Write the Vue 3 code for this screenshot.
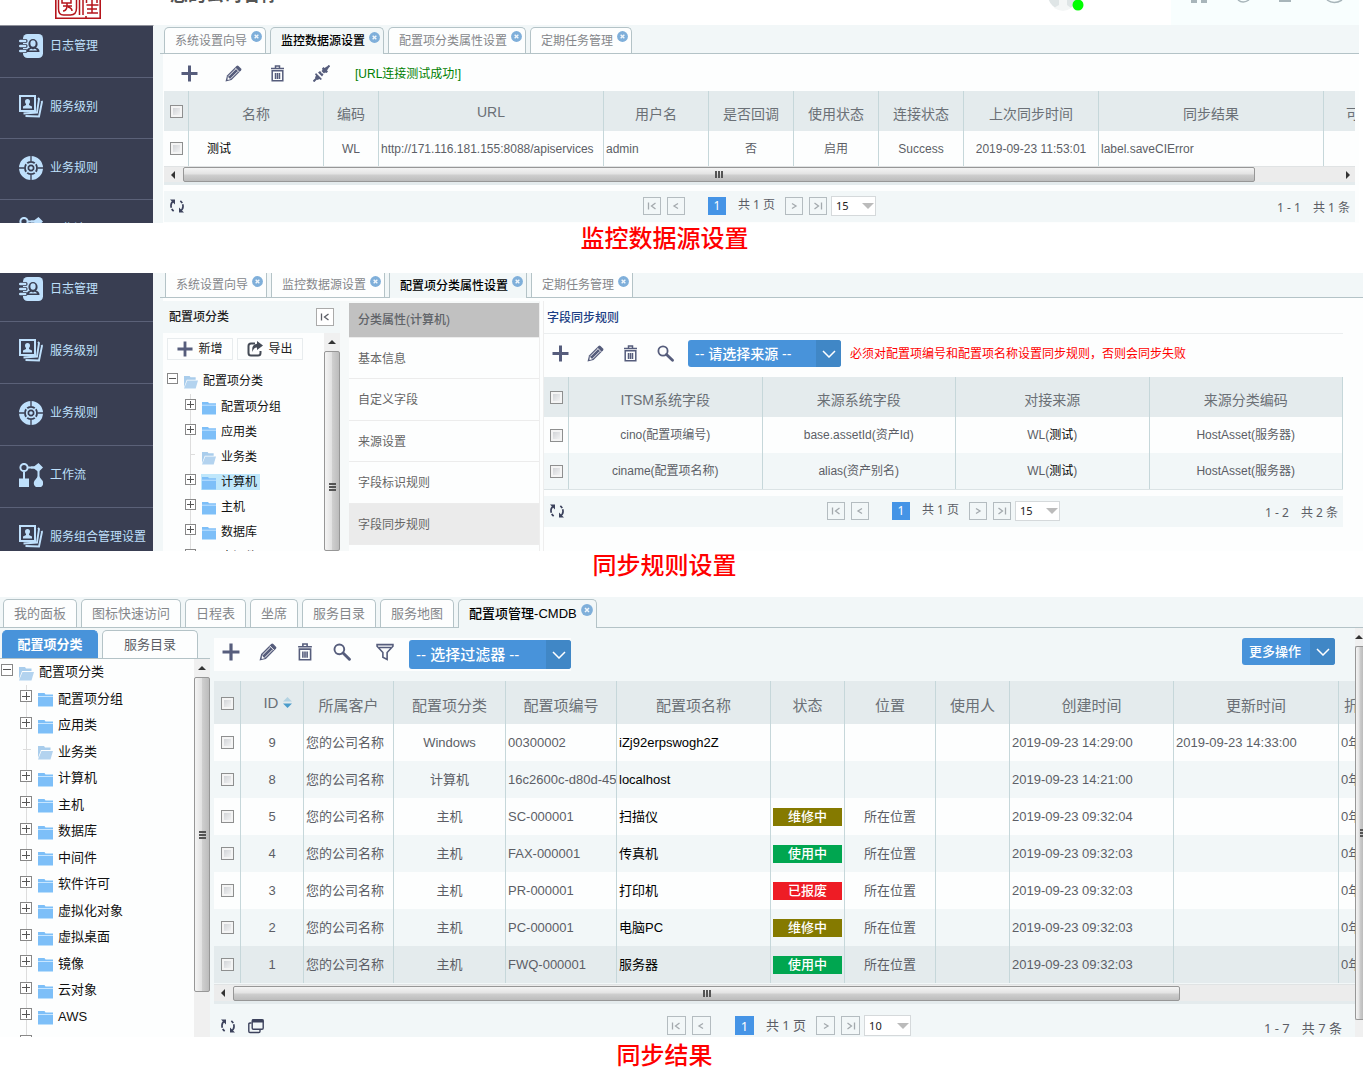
<script setup>
import { ref } from 'vue'

const menuTop = [
  { icon: 'log', label: '日志管理' },
  { icon: 'cards', label: '服务级别' },
  { icon: 'wheel', label: '业务规则' },
  { icon: 'flow', label: '工作流' },
]
const menuFull = [...menuTop, { icon: 'cards', label: '服务组合管理设置' }]

const settingTabs = ['系统设置向导', '监控数据源设置', '配置项分类属性设置', '定期任务管理']
const cmdbTabs = ['我的面板', '图标快速访问', '日程表', '坐席', '服务目录', '服务地图', '配置项管理-CMDB']

const sourceTools = [
  { icon: 'plus', name: '新增' },
  { icon: 'pencil', name: '编辑' },
  { icon: 'trash', name: '删除' },
  { icon: 'plug', name: '连接测试' },
]
const ruleTools = [...sourceTools.slice(0, 3), { icon: 'search', name: '查询' }]
const cmdbTools = [...ruleTools, { icon: 'filter', name: '过滤' }]

const sourceCols = [25, 135, 55, 225, 105, 85, 85, 85, 135, 225]
const cmdbCols = [27, 63, 90, 112, 111, 154, 74, 91, 74, 164, 165]

const ruleRows = [
  { field: 'cino(配置项编号)', source: 'base.assetId(资产Id)' },
  { field: 'ciname(配置项名称)', source: 'alias(资产别名)' },
]

const attrMenu = ['基本信息', '自定义字段', '来源设置', '字段标识规则', '字段同步规则']
const treeSmall = ['配置项分组', '应用类', '业务类', '计算机', '主机', '数据库', '中间件']
const treeLarge = [
  '配置项分组', '应用类', '业务类', '计算机', '主机', '数据库', '中间件',
  '软件许可', '虚拟化对象', '虚拟桌面', '镜像', '云对象', 'AWS', 'DevOps',
]

const company = '您的公司名称'
const place = '所在位置'
const ciRows = [
  { id: 9, type: 'Windows', no: '00300002', name: 'iZj92erpswogh2Z', state: '', place: '', created: '2019-09-23 14:29:00', updated: '2019-09-23 14:33:00' },
  { id: 8, type: '计算机', no: '16c2600c-d80d-45', name: 'localhost', state: '', place: '', created: '2019-09-23 14:21:00', updated: '' },
  { id: 5, type: '主机', no: 'SC-000001', name: '扫描仪', state: '维修中', place, created: '2019-09-23 09:32:04', updated: '' },
  { id: 4, type: '主机', no: 'FAX-000001', name: '传真机', state: '使用中', place, created: '2019-09-23 09:32:03', updated: '' },
  { id: 3, type: '主机', no: 'PR-000001', name: '打印机', state: '已报废', place, created: '2019-09-23 09:32:03', updated: '' },
  { id: 2, type: '主机', no: 'PC-000001', name: '电脑PC', state: '维修中', place, created: '2019-09-23 09:32:03', updated: '' },
  { id: 1, type: '主机', no: 'FWQ-000001', name: '服务器', state: '使用中', place, created: '2019-09-23 09:32:03', updated: '' },
]
const stateClass = { 维修中: 'repair', 使用中: 'active', 已报废: 'scrap' }

const sizeA = ref('15')
const sizeB = ref('15')
const sizeC = ref('10')
</script>

<template>
  <svg class="defs" width="0" height="0" aria-hidden="true">
    <symbol id="i-plus" viewBox="0 0 17 17"><path d="M8.500 .5v16M.5 8.500h16" fill="none" stroke="#565d7c" stroke-width="3" /></symbol>
    <symbol id="i-pencil" viewBox="0 0 17 17">
      <path d="M.5 16.500l1.500-6L11.500 1q1-1 2 0l2.500 2.500q1 1 0 2L6.500 15z" fill="#565d7c" />
      <path d="M3.200 11.500l7.500-7.500M5.500 13.800l7.500-7.500M10.200 2.800l4 4" stroke="#fff" stroke-width="0.900" fill="none" />
      <path d="M2.800 11.800l2.500 2.500-2.800.8z" fill="#fff" />
    </symbol>
    <symbol id="i-trash" viewBox="0 0 17 17">
      <path d="M2 3.500h13M6.500 3V1h4v2M3.200 5.800h10.600v10H3.200zM6.500 8v6M8.500 8v6M10.500 8v6" fill="none" stroke="#565d7c" stroke-width="1.500" />
    </symbol>
    <symbol id="i-plug" viewBox="0 0 17 17">
      <path d="M16.500 .5l-4 4M.5 16.500l4-4" stroke="#565d7c" stroke-width="2" />
      <path d="M9 3.500l1.500-1.500 1 1L14 1.500 15.500 3l-1.500 2.500 1 1L13.500 8 12 7.500l-1 1L8.500 6l1-1zM3 8l6 6-1.500 1L6.500 14l-2 1-2.500-2.500 1-2L2 9.500zM5 7.500L7 6l1.500 1.500-.5 1 1-.5L10.500 9.500 9 11.500z" fill="#565d7c" />
    </symbol>
    <symbol id="i-search" viewBox="0 0 17 17">
      <circle cx="6" cy="6" r="4.600" fill="none" stroke="#565d7c" stroke-width="1.800" />
      <path d="M9.500 9.500l6 5.800" stroke="#565d7c" stroke-width="2.800" stroke-linecap="round" />
    </symbol>
    <symbol id="i-filter" viewBox="0 0 17 17">
      <path d="M1 1.500h15v1.500L10.500 9v6.500l-4-2V9L1 3zM3 4.200h11" fill="none" stroke="#565d7c" stroke-width="1.500" />
    </symbol>
    <symbol id="i-refresh" viewBox="0 0 16 16">
      <path d="M5 2.800C1 5 1 11 5.500 13.800M11 13.200C15 11 15 5 10.500 2.200" fill="none" stroke="#3c425c" stroke-width="1.700" stroke-dasharray="8 1.200 3" />
      <path d="M1 1.500h5v5zM15 14.500h-5v-5z" fill="#3c425c" />
    </symbol>
    <symbol id="i-windows" viewBox="0 0 16 16">
      <rect x="4.200" y="1.700" width="11" height="9.600" rx="1.200" fill="none" stroke="#3c425c" stroke-width="1.400" />
      <path d="M4 1.500h11.500v3H4z" fill="#3c425c" />
      <path d="M3.500 5H2Q.8 5 .8 6.200v7Q.8 14.500 2 14.500h8.800q1.200 0 1.200-1.200V12" fill="none" stroke="#3c425c" stroke-width="1.400" />
    </symbol>
    <symbol id="i-export" viewBox="0 0 16 16">
      <path d="M8 2.500H4Q1.500 2.500 1.500 5v7Q1.500 14.500 4 14.500h7q2.500 0 2.500-2.500v-2" fill="none" stroke="#444a55" stroke-width="2" />
      <path d="M10 0l6 4.500L10 9V6.500Q6.500 6.500 5.500 11 4 3.500 10 2.800z" fill="#444a55" />
    </symbol>
    <symbol id="i-close" viewBox="0 0 12 12">
      <circle cx="6" cy="6" r="5.900" fill="#7fafda" />
      <path d="M4 4l4 4M8 4L4 8" stroke="#f0f6fb" stroke-width="1.500" />
    </symbol>
    <symbol id="i-folder" viewBox="0 0 15 15">
      <path d="M0 1h6.500l1 1.500H15V14.500H0z" fill="#7dbff8" />
      <path d="M0 4.500h15" stroke="#c8e6ff" stroke-width="1" />
    </symbol>
    <symbol id="i-folder-open" viewBox="0 0 15 15">
      <path d="M0 1h6l1 1.500h5.500V5H3L0 13z" fill="#a9cdec" />
      <path d="M3.500 6H15l-2.500 8.500H0z" fill="#b3d3ef" />
    </symbol>
    <symbol id="i-first" viewBox="0 0 16 16"><path d="M4.500 4.500v7M11.500 5L7.500 8l4 3" fill="none" stroke="currentColor" stroke-width="1.300" /></symbol>
    <symbol id="i-prev" viewBox="0 0 16 16"><path d="M10 5.500L6 8l4 2.500" fill="none" stroke="currentColor" stroke-width="1.300" /></symbol>
    <symbol id="i-next" viewBox="0 0 16 16"><path d="M6 5.500L10 8l-4 2.500" fill="none" stroke="currentColor" stroke-width="1.300" /></symbol>
    <symbol id="i-last" viewBox="0 0 16 16"><path d="M11.500 4.500v7M4.500 5L8.500 8l-4 3" fill="none" stroke="currentColor" stroke-width="1.300" /></symbol>
    <symbol id="i-chevron" viewBox="0 0 14 8"><path d="M1 1l6 6 6-6" fill="none" stroke="#fff" stroke-width="1.500" /></symbol>
    <symbol id="i-log" viewBox="0 0 24 24">
      <rect x="4" y="0" width="20" height="24" rx="4.500" fill="#bfe0fc" />
      <ellipse cx="14" cy="10" rx="4.600" ry="5" fill="#393e52" />
      <path d="M7.500 18q0-4 4-4.500h5q4 .5 4 4.500z" fill="#393e52" />
      <ellipse cx="14" cy="9.500" rx="2.600" ry="3.200" fill="#bfe0fc" />
      <path d="M10 16.500q.5-1.500 2.500-1.800l1.500.8 1.500-.8q2 .3 2.500 1.800z" fill="#bfe0fc" />
      <path d="M1 7h5.500M1 12h5.500M1 17h5.500" stroke="#393e52" stroke-width="4.200" stroke-linecap="round" />
      <path d="M1.200 7h5M1.200 12h5M1.200 17h5" stroke="#bfe0fc" stroke-width="2.400" stroke-linecap="round" />
    </symbol>
    <symbol id="i-cards" viewBox="0 0 24 24">
      <path d="M1 1h15v15H1z" fill="none" stroke="#bfe0fc" stroke-width="2" />
      <path d="M4 13.500v-2l3-1.500V9q-1-1-1-2.500Q6 4 8.500 4T11 6.500Q11 8 10 9v1l3 1.500v2z" fill="#bfe0fc" />
      <path d="M19 3l1 1-2 13.500L4.500 18.500M22.500 6l.5 1-3 14.500L6.500 21" fill="none" stroke="#bfe0fc" stroke-width="1.900" />
    </symbol>
    <symbol id="i-wheel" viewBox="0 0 24 24">
      <circle cx="12" cy="12" r="9.500" fill="none" stroke="#bfe0fc" stroke-width="5" />
      <path d="M12 0v5M12 19v5M0 12h5M19 12h5" stroke="#393e52" stroke-width="1.300" />
      <circle cx="12" cy="12" r="4.300" fill="none" stroke="#bfe0fc" stroke-width="1.700" />
      <circle cx="12" cy="12" r="1.800" fill="#bfe0fc" />
      <path d="M6.500 6.500l3 3M17.500 6.500l-3 3M6.500 17.500l3-3M17.500 17.500l-3-3" stroke="#bfe0fc" stroke-width="1.500" />
    </symbol>
    <symbol id="i-flow" viewBox="0 0 24 24">
      <circle cx="5" cy="4.500" r="3.600" fill="none" stroke="#bfe0fc" stroke-width="2" />
      <path d="M9 4.500h7M5 9v7M19.500 8v9" stroke="#bfe0fc" stroke-width="2" />
      <path d="M12 3.500h3l4.500-3.500L24 4.500 19.500 9 15 5.500h-3z" fill="#bfe0fc" />
      <rect x="0" y="15.500" width="10" height="8.500" fill="#bfe0fc" />
      <path d="M19.500 12q1 2.500 3 4.500a4.700 4.700 0 1 1-6 0q2-2 3-4.500z" fill="#bfe0fc" />
    </symbol>
  </svg>

  <main class="page">
    <figure>
      <div class="shot shot-source">
        <header class="topbar">
          <svg class="seal" width="46" height="19" viewBox="0 0 46 19" aria-label="徽标" role="img">
            <g fill="none" stroke="#b5151c" stroke-width="1.500">
              <path d="M.8 0v18.200h44.400V0M31 18.200V16" stroke-width="1.600" />
              <path d="M3.500 0v9q0 6 5 6h7q6 0 6-7V0M7 0v3h9V0M8 6h9M12 3v4q-1 4-4 4M13 7q4 1 4 4" />
              <path d="M24.500 0v15M28 0v15M31.500 5h12M31.500 0v3M37 0v5M42 0v3M32 9h10M37 5v8M32 13h11" />
            </g>
          </svg>
          <h1>{{ company }}</h1>
          <svg class="avatar" width="30" height="12" viewBox="0 0 30 12" aria-hidden="true">
            <circle cx="15" cy="-5" r="15" fill="#dfe5e6" />
            <path d="M6 8q3-2 5-3V0h8v5l4 3q-4 3-8 3t-9-3z" fill="#f4f6f6" />
            <circle cx="30" cy="5" r="5.500" fill="#0f0" />
          </svg>
          <div class="quick">
            <svg width="160" height="4" viewBox="0 0 160 4" aria-hidden="true">
              <g fill="#a8b5ba">
                <path d="M0 0h6v3H0zM10 0h6v3h-6zM88 0h12v2H88z" />
                <path d="M47 0q5 4 11 0M136 0q7 5 15 0" fill="none" stroke="#a8b5ba" stroke-width="1.500" />
              </g>
            </svg>
          </div>
        </header>
        <div class="body">
          <nav class="side">
            <ul>
              <li v-for="m in menuTop" :key="m.label">
                <a href="#"><svg width="24" height="24" aria-hidden="true"><use :href="'#i-' + m.icon" /></svg>{{ m.label }}</a>
              </li>
            </ul>
          </nav>
          <section class="work">
            <nav class="tabs">
              <a v-for="(t, i) in settingTabs" :key="t" href="#" class="tab" :class="{ on: i === 1 }">
                {{ t }}<svg width="11" height="11" aria-hidden="true"><use href="#i-close" /></svg>
              </a>
            </nav>
            <div class="panel">
              <div class="tools">
                <button v-for="t in sourceTools" :key="t.icon" type="button" class="icon" :aria-label="t.name">
                  <svg width="17" height="17"><use :href="'#i-' + t.icon" /></svg>
                </button>
                <span class="ok">[URL连接测试成功!]</span>
              </div>
              <div class="scroller">
                <table>
                  <colgroup><col v-for="(w, i) in sourceCols" :key="i" :style="{ width: w + 'px' }" /><col /></colgroup>
                  <thead>
                    <tr>
                      <th><input type="checkbox" aria-label="全选" /></th>
                      <th>名称</th><th>编码</th><th class="latin">URL</th><th>用户名</th><th>是否回调</th>
                      <th>使用状态</th><th>连接状态</th><th>上次同步时间</th><th>同步结果</th><th class="cut">可</th>
                    </tr>
                  </thead>
                  <tbody>
                    <tr>
                      <td><input type="checkbox" aria-label="选择 测试" /></td>
                      <td class="left name">测试</td><td>WL</td>
                      <td class="left">http://171.116.181.155:8088/apiservices</td><td class="left">admin</td>
                      <td>否</td><td>启用</td><td>Success</td><td>2019-09-23 11:53:01</td>
                      <td class="left">label.saveCIError</td><td></td>
                    </tr>
                  </tbody>
                </table>
              </div>
              <div class="hbar" aria-hidden="true">
                <i class="arrow prev"></i>
                <div class="hthumb" :style="{ width: '90%' }"><i></i></div>
                <i class="arrow next"></i>
              </div>
              <footer class="foot">
                <div class="actions">
                  <button type="button" class="icon" aria-label="刷新"><svg width="16" height="16"><use href="#i-refresh" /></svg></button>
                </div>
                <div class="pager">
                  <button type="button" aria-label="首页"><svg width="16" height="16"><use href="#i-first" /></svg></button>
                  <button type="button" aria-label="上一页"><svg width="16" height="16"><use href="#i-prev" /></svg></button>
                  <button type="button" class="current">1</button>
                  <span>共 1 页</span>
                  <button type="button" aria-label="下一页"><svg width="16" height="16"><use href="#i-next" /></svg></button>
                  <button type="button" aria-label="末页"><svg width="16" height="16"><use href="#i-last" /></svg></button>
                  <label class="size"><select v-model="sizeA" aria-label="每页条数"><option>15</option><option>30</option></select></label>
                </div>
                <div class="total"><span>1 - 1</span><span>共 1 条</span></div>
              </footer>
            </div>
          </section>
        </div>
      </div>
      <figcaption>监控数据源设置</figcaption>
    </figure>

    <figure>
      <div class="shot shot-rule">
        <div class="body">
          <nav class="side">
            <ul>
              <li v-for="m in menuFull" :key="m.label">
                <a href="#"><svg width="24" height="24" aria-hidden="true"><use :href="'#i-' + m.icon" /></svg>{{ m.label }}</a>
              </li>
            </ul>
          </nav>
          <section class="work">
            <nav class="tabs">
              <a v-for="(t, i) in settingTabs" :key="t" href="#" class="tab" :class="{ on: i === 2 }">
                {{ t }}<svg width="11" height="11" aria-hidden="true"><use href="#i-close" /></svg>
              </a>
            </nav>
            <div class="columns">
              <aside class="classes">
                <header>
                  <h2>配置项分类</h2>
                  <button type="button" class="fold" aria-label="收起"><svg width="16" height="16"><use href="#i-first" /></svg></button>
                </header>
                <div class="treebox">
                  <div class="treemain">
                    <div class="treebtns">
                      <button type="button"><svg width="16" height="16" aria-hidden="true"><use href="#i-plus" /></svg>新增</button>
                      <button type="button"><svg width="16" height="16" aria-hidden="true"><use href="#i-export" /></svg>导出</button>
                    </div>
                    <ul class="tree">
                      <li class="root"><i class="exp open"></i><a href="#"><svg width="14" height="14" aria-hidden="true"><use href="#i-folder-open" /></svg>配置项分类</a></li>
                      <li v-for="n in treeSmall" :key="n" :class="{ leaf: n === '业务类', sel: n === '计算机' }">
                        <i class="exp"></i><a href="#"><svg width="14" height="14" aria-hidden="true"><use :href="n === '业务类' ? '#i-folder-open' : '#i-folder'" /></svg>{{ n }}</a>
                      </li>
                    </ul>
                  </div>
                  <div class="vbar" aria-hidden="true"><i class="arrow up"></i><div class="vthumb"><i></i></div></div>
                </div>
              </aside>
              <nav class="attrs">
                <h2>分类属性(计算机)</h2>
                <a v-for="(a, i) in attrMenu" :key="a" href="#" :class="{ on: i === 4 }">{{ a }}</a>
              </nav>
              <div class="rules">
                <h2>字段同步规则</h2>
                <div class="tools">
                  <button v-for="t in ruleTools" :key="t.icon" type="button" class="icon" :aria-label="t.name">
                    <svg width="17" height="17"><use :href="'#i-' + t.icon" /></svg>
                  </button>
                  <label class="pick">
                    <select aria-label="来源"><option>-- 请选择来源 --</option></select>
                    <i><svg width="14" height="8" aria-hidden="true"><use href="#i-chevron" /></svg></i>
                  </label>
                  <span class="warn">必须对配置项编号和配置项名称设置同步规则，否则会同步失败</span>
                </div>
                <table>
                  <colgroup><col class="tick" /><col /><col /><col /><col /></colgroup>
                  <thead>
                    <tr><th><input type="checkbox" aria-label="全选" /></th><th>ITSM系统字段</th><th>来源系统字段</th><th>对接来源</th><th>来源分类编码</th></tr>
                  </thead>
                  <tbody>
                    <tr v-for="r in ruleRows" :key="r.field">
                      <td><input type="checkbox" :aria-label="'选择 ' + r.field" /></td>
                      <td>{{ r.field }}</td><td>{{ r.source }}</td><td>WL(<b>测试</b>)</td><td>HostAsset(服务器)</td>
                    </tr>
                  </tbody>
                </table>
                <footer class="foot">
                  <div class="actions">
                    <button type="button" class="icon" aria-label="刷新"><svg width="16" height="16"><use href="#i-refresh" /></svg></button>
                  </div>
                  <div class="pager">
                    <button type="button" aria-label="首页"><svg width="16" height="16"><use href="#i-first" /></svg></button>
                    <button type="button" aria-label="上一页"><svg width="16" height="16"><use href="#i-prev" /></svg></button>
                    <button type="button" class="current">1</button>
                    <span>共 1 页</span>
                    <button type="button" aria-label="下一页"><svg width="16" height="16"><use href="#i-next" /></svg></button>
                    <button type="button" aria-label="末页"><svg width="16" height="16"><use href="#i-last" /></svg></button>
                    <label class="size"><select v-model="sizeB" aria-label="每页条数"><option>15</option><option>30</option></select></label>
                  </div>
                  <div class="total"><span>1 - 2</span><span>共 2 条</span></div>
                </footer>
              </div>
            </div>
          </section>
        </div>
      </div>
      <figcaption>同步规则设置</figcaption>
    </figure>

    <figure>
      <div class="shot shot-cmdb">
        <nav class="tabs">
          <a v-for="(t, i) in cmdbTabs" :key="t" href="#" class="tab" :class="{ on: i === 6 }">
            {{ t }}<svg v-if="i === 6" width="12" height="12" aria-hidden="true"><use href="#i-close" /></svg>
          </a>
        </nav>
        <div class="body">
          <aside class="catalog">
            <nav class="subtabs"><a href="#" class="on">配置项分类</a><a href="#">服务目录</a></nav>
            <div class="treebox">
              <ul class="tree big">
                <li class="root"><i class="exp open"></i><a href="#"><svg width="15" height="15" aria-hidden="true"><use href="#i-folder-open" /></svg>配置项分类</a></li>
                <li v-for="n in treeLarge" :key="n" :class="{ leaf: n === '业务类' }">
                  <i class="exp"></i><a href="#"><svg width="15" height="15" aria-hidden="true"><use :href="n === '业务类' ? '#i-folder-open' : '#i-folder'" /></svg>{{ n }}</a>
                </li>
              </ul>
              <div class="vbar" aria-hidden="true"><i class="arrow up"></i><div class="vthumb"><i></i></div></div>
            </div>
          </aside>
          <section class="items">
            <div class="toolrow">
              <div class="tools">
                <button v-for="t in cmdbTools" :key="t.icon" type="button" class="icon" :class="t.icon" :aria-label="t.name">
                  <svg width="18" height="18"><use :href="'#i-' + t.icon" /></svg>
                </button>
                <label class="pick">
                  <select aria-label="过滤器"><option>-- 选择过滤器 --</option></select>
                  <i><svg width="14" height="8" aria-hidden="true"><use href="#i-chevron" /></svg></i>
                </label>
              </div>
              <button type="button" class="more"><span>更多操作</span><i><svg width="14" height="8" aria-hidden="true"><use href="#i-chevron" /></svg></i></button>
            </div>
            <div class="scroller">
              <table>
                <colgroup><col v-for="(w, i) in cmdbCols" :key="i" :style="{ width: w + 'px' }" /><col /></colgroup>
                <thead>
                  <tr>
                    <th><input type="checkbox" aria-label="全选" /></th>
                    <th class="latin sort">ID
                      <svg width="9" height="11" viewBox="0 0 9 11" aria-hidden="true"><path d="M0 4.500L4.500 0 9 4.500z" fill="#b4d3e2" /><path d="M0 6.500L4.500 11 9 6.500z" fill="#4a9ccb" /></svg>
                    </th>
                    <th>所属客户</th><th>配置项分类</th><th>配置项编号</th><th>配置项名称</th><th>状态</th>
                    <th>位置</th><th>使用人</th><th>创建时间</th><th>更新时间</th><th class="cut">折</th>
                  </tr>
                </thead>
                <tbody>
                  <tr v-for="r in ciRows" :key="r.id" :class="{ picked: r.id === 1 }">
                    <td><input type="checkbox" :aria-label="'选择 ' + r.name" /></td>
                    <td>{{ r.id }}</td><td class="left">{{ company }}</td><td>{{ r.type }}</td>
                    <td class="left">{{ r.no }}</td><td class="left name">{{ r.name }}</td>
                    <td class="st"><span v-if="r.state" class="badge" :class="stateClass[r.state]">{{ r.state }}</span></td>
                    <td>{{ r.place }}</td><td></td><td class="left">{{ r.created }}</td>
                    <td class="left">{{ r.updated }}</td><td class="left">0年</td>
                  </tr>
                </tbody>
              </table>
            </div>
            <div class="hbar" aria-hidden="true">
              <i class="arrow prev"></i>
              <div class="hthumb" :style="{ width: '83%' }"><i></i></div>
            </div>
            <footer class="foot">
              <div class="actions">
                <button type="button" class="icon" aria-label="刷新"><svg width="16" height="16"><use href="#i-refresh" /></svg></button>
                <button type="button" class="icon" aria-label="列设置"><svg width="16" height="16"><use href="#i-windows" /></svg></button>
              </div>
              <div class="pager">
                <button type="button" aria-label="首页"><svg width="16" height="16"><use href="#i-first" /></svg></button>
                <button type="button" aria-label="上一页"><svg width="16" height="16"><use href="#i-prev" /></svg></button>
                <button type="button" class="current">1</button>
                <span>共 1 页</span>
                <button type="button" aria-label="下一页"><svg width="16" height="16"><use href="#i-next" /></svg></button>
                <button type="button" aria-label="末页"><svg width="16" height="16"><use href="#i-last" /></svg></button>
                <label class="size"><select v-model="sizeC" aria-label="每页条数"><option>10</option><option>20</option></select></label>
              </div>
              <div class="total"><span>1 - 7</span><span>共 7 条</span></div>
            </footer>
          </section>
          <div class="vbar edge" aria-hidden="true"><i class="arrow up"></i><div class="vthumb"><i></i></div></div>
        </div>
      </div>
      <figcaption>同步结果</figcaption>
    </figure>
  </main>
</template>

<style>
body {
  background: #fff;
}
</style>

<style scoped>
* {
  box-sizing: border-box;
}
.defs {
  position: absolute;
}
.page {
  font: 12px/16px "Liberation Sans", "Noto Sans CJK SC", sans-serif;
  color: #5c5e66;
}
.page a {
  color: inherit;
  text-decoration: none;
}
.page svg {
  display: block;
  flex: none;
}
figure,
h1,
h2,
ul {
  margin: 0;
  padding: 0;
}
li {
  list-style: none;
}
button,
select {
  font: inherit;
  color: inherit;
  margin: 0;
  padding: 0;
  border: 0;
  background: none;
}
select {
  appearance: none;
}
figcaption {
  height: 50px;
  padding-right: 34px;
  color: #f00;
  font-size: 24px;
  font-weight: 500;
  line-height: 32px;
  text-align: center;
}
figure:nth-child(2) figcaption {
  height: 46px;
  line-height: 30px;
}
figure:last-child figcaption {
  height: 45px;
  line-height: 38px;
}
.shot {
  display: flex;
  flex-direction: column;
  overflow: hidden;
}
.shot-source {
  height: 223px;
}
.shot-rule {
  height: 278px;
}
.shot-cmdb {
  height: 440px;
  background: #f2f7f8;
  font-size: 13px;
}
.body {
  display: flex;
  flex: 1;
  min-height: 0;
}

/* top bar */
.topbar {
  display: flex;
  align-items: flex-start;
  height: 25px;
  padding: 0 4px 0 55px;
  overflow: hidden;
}
.topbar h1 {
  flex: 1;
  margin: -17px 0 0 69px;
  color: #555;
  font-size: 18px;
  line-height: 24px;
}
.avatar {
  margin-right: 93px;
  overflow: visible;
}
.quick {
  width: 188px;
  height: 25px;
  padding-left: 20px;
  background: #f8fefe;
}

/* dark side menu */
.side {
  width: 154px;
  overflow: hidden;
  flex: none;
  background: #393e52;
  border-right: 1px solid #f4f6f8;
}
.shot-source .side {
  border-top: 1px solid #8f919b;
}
.side ul {
  margin-top: -9px;
}
.side li {
  height: 61px;
  border-bottom: 1px solid #5b6178;
}
.side a {
  display: flex;
  align-items: center;
  gap: 7px;
  height: 100%;
  padding: 0 0 3px 19px;
  color: #bfe0fc;
  white-space: nowrap;
}
.shot-rule .side ul {
  margin-top: -13px;
}
.shot-rule .side li {
  height: 62px;
}

/* tab strips */
.work {
  flex: 1;
  min-width: 0;
  display: flex;
  flex-direction: column;
  margin-right: 4px;
  background: linear-gradient(90deg, #f2f7f8 9px, #fdfefe 9px);
}
.tabs {
  display: flex;
  align-items: flex-end;
  gap: 4px;
  flex: none;
  height: 29px;
  margin-left: 6px;
  padding-left: 4px;
  border-bottom: 1px solid #b4c3c7;
  background: #f2f7f8;
}
.tab {
  display: flex;
  align-items: center;
  gap: 4px;
  height: 26px;
  padding: 0 3px 0 10px;
  border: 1px solid #b4c3c7;
  border-bottom: 0;
  border-radius: 5px 5px 0 0;
  background: #fdfefe;
  white-space: nowrap;
}
.page .tab {
  color: #85878b;
}
.tab svg {
  margin-bottom: 8px;
}
.tab.on {
  height: 27px;
  margin-bottom: -1px;
  background: #f2f7f8;
  font-weight: 500;
}
.page .tab.on {
  color: #000;
}
.shot-rule .work {
  margin-right: 0;
}
.shot-rule .tabs {
  height: 25px;
  padding-left: 5px;
}
.shot-rule .tab {
  height: 24px;
  border-top: 0;
  border-radius: 0;
}
.shot-rule .tab.on {
  height: 25px;
}
.shot-cmdb .tabs {
  height: 31px;
  margin-left: 0;
  padding-left: 3px;
}
.shot-cmdb .tab {
  height: 28px;
  padding: 0 10px;
}
.shot-cmdb .tab.on {
  height: 29px;
  padding-right: 3px;
}

/* tool bars */
.panel {
  margin: 0 4px 0 10px;
}
.tools {
  display: flex;
  align-items: center;
  gap: 27px;
  height: 37px;
  padding: 2px 0 0 17px;
}
.ok {
  margin-left: -2px;
  color: #008000;
}
.warn {
  color: #f00;
}
.pick {
  display: flex;
  border-radius: 3px;
  overflow: hidden;
  background: #4893da;
  color: #fff;
  font-size: 14px;
  font-weight: 500;
}
.pick select {
  padding: 0 7px;
  flex: 1;
}
.pick i,
.more i {
  display: flex;
  align-items: center;
  justify-content: center;
  width: 25px;
  background: #4087c6;
}

/* tables */
.scroller {
  overflow: hidden;
}
table {
  width: 100%;
  table-layout: fixed;
  border-collapse: separate;
  border-spacing: 0;
}
th,
td {
  padding: 0;
  border-right: 1px solid #c6d7da;
  font-weight: 400;
  text-align: center;
  white-space: nowrap;
  overflow: hidden;
}
.scroller th:last-child,
.scroller td:last-child {
  border-right: 0;
}
th {
  height: 40px;
  padding-top: 5px;
  background: #e4ebed;
  color: #6b7076;
  font-size: 14px;
}
th:first-child,
th.latin {
  padding-top: 1px;
}
td {
  height: 35px;
  background: #fdfefe;
}
tr:nth-child(even) td {
  background: #f2f7f8;
}
td.left {
  padding-left: 2px;
  text-align: left;
}
td.name,
td b {
  color: #000;
  font-weight: 400;
}
.shot-source td.name {
  padding-left: 18px;
}
th.cut {
  padding-left: 22px;
  text-align: left;
}
input[type="checkbox"] {
  appearance: none;
  display: block;
  width: 13px;
  height: 13px;
  margin: 0 auto;
  border: 1px solid #8e8f8f;
  background: linear-gradient(135deg, #c9ccd0, #fafafa);
  box-shadow: inset 0 0 0 2px #f4f4f4;
}

/* scroll bars */
.hbar {
  display: flex;
  align-items: center;
  height: 19px;
  border-top: 1px solid #e0e3e4;
  border-bottom: 3px solid #e4ebed;
  background: #ececec;
}
.arrow {
  border: 4px solid transparent;
}
.arrow.prev {
  margin: 0 8px 0 3px;
  border-right-color: #333;
}
.arrow.next {
  margin: 0 1px 0 auto;
  border-left-color: #333;
}
.arrow.up {
  margin: 3px auto 7px;
  border-bottom-color: #333;
}
.hthumb {
  display: flex;
  align-items: center;
  justify-content: center;
  height: 15px;
  border: 1px solid #979797;
  border-radius: 2px;
  background: linear-gradient(#f4f4f4, #e2e2e2 48%, #cfcfcf 52%, #bcbcbc);
}
.hthumb i {
  width: 8px;
  height: 7px;
  background: repeating-linear-gradient(90deg, #555 0 2px, transparent 2px 3px);
}
.vbar {
  display: flex;
  flex-direction: column;
  flex: none;
  width: 16px;
  background: #f0f0f0;
}
.vthumb {
  display: flex;
  align-items: center;
  justify-content: center;
  flex: 1;
  border: 1px solid #979797;
  border-radius: 2px;
  background: linear-gradient(90deg, #f4f4f4, #e2e2e2 48%, #cfcfcf 52%, #bcbcbc);
}
.vthumb i {
  width: 7px;
  height: 8px;
  background: repeating-linear-gradient(#555 0 2px, transparent 2px 3px);
}
.classes .vthumb {
  padding-top: 72px;
}

/* footers */
.foot {
  display: grid;
  grid-template-columns: 1fr auto 1fr;
  align-items: center;
  height: 31px;
  margin-top: 6px;
  padding-bottom: 2px;
  background: #f2f7f8;
}
.actions {
  display: flex;
  gap: 12px;
  padding-left: 5px;
}
.pager {
  display: flex;
  align-items: center;
  gap: 6px;
  font-family: "Noto Sans", "Noto Sans CJK SC", sans-serif;
}
.pager button {
  display: flex;
  align-items: center;
  justify-content: center;
  width: 18px;
  height: 18px;
  border: 1px solid #b4bcc0;
  color: #a3a9ad;
}
.pager .current {
  margin-left: 17px;
  border-color: #4594e6;
  background: #4594e6;
  color: #fff;
}
.pager span {
  margin: 0 4px 2px 6px;
}
.size {
  display: flex;
  align-items: center;
  width: 45px;
  height: 20px;
  margin-left: -2px;
  border: 1px solid #d5d9db;
  background: #fff;
  color: #222;
  font-size: 11px;
}
.size select {
  flex: 1;
  min-width: 0;
  padding-left: 4px;
}
.size::after {
  content: "";
  margin-right: 1px;
  border: 6px solid transparent;
  border-top: 6px solid #bbb;
  border-bottom: 0;
}
.total {
  display: flex;
  justify-content: flex-end;
  gap: 12px;
  padding: 4px 5px 0 0;
  font-family: "Noto Sans", "Noto Sans CJK SC", sans-serif;
}

/* sync rule page */
.columns {
  display: flex;
  flex: 1;
  min-height: 0;
  padding: 3px 20px 0 9px;
}
.classes {
  display: flex;
  flex-direction: column;
  width: 186px;
  flex: none;
  border-right: 9px solid #f6f9f9;
}
.classes header {
  display: flex;
  align-items: center;
  justify-content: space-between;
  height: 32px;
  padding: 0 6px;
  background: #f2f7f8;
}
h2 {
  font-size: 12px;
  font-weight: 500;
}
.classes h2 {
  color: #222;
}
.fold {
  display: flex;
  align-items: center;
  justify-content: center;
  width: 18px;
  height: 18px;
  border: 1px solid #aaa;
  background: #fff;
}
.treebox {
  display: flex;
  flex: 1;
  min-height: 0;
  background: #fdfefe;
}
.treemain {
  flex: 1;
  overflow: hidden;
}
.treebtns {
  display: flex;
  gap: 4px;
  padding: 5px 4px 8px;
}
.treebtns button {
  display: flex;
  align-items: center;
  justify-content: center;
  gap: 5px;
  width: 66px;
  height: 22px;
  border: 1px solid #e8ecee;
  color: #222;
}
.tree {
  flex: 1;
  overflow: hidden;
  background: linear-gradient(#ddd, #ddd) 27px 26px / 1px 100% no-repeat;
}
.tree li {
  display: flex;
  align-items: center;
  height: 25px;
  padding-left: 22px;
  color: #111;
}
.tree .root {
  height: 26px;
  padding-left: 4px;
}
.tree a {
  display: flex;
  align-items: center;
  gap: 5px;
  padding: 0 3px 0 1px;
  white-space: nowrap;
}
.tree a svg {
  margin-top: 2px;
}
.tree .sel a {
  background: #bfe7fb;
}
.exp {
  flex: none;
  width: 11px;
  height: 11px;
  margin: 0 5px 5px 0;
  border: 1px solid #888;
  background:
    linear-gradient(#555, #555) center / 7px 1px no-repeat,
    linear-gradient(#555, #555) center / 1px 7px no-repeat,
    #fff;
}
.exp.open {
  background: linear-gradient(#555, #555) center / 7px 1px no-repeat, #fff;
}
.leaf .exp {
  border-color: transparent;
  background: linear-gradient(#ddd, #ddd) right center / 5px 1px no-repeat;
}
.attrs {
  width: 191px;
  flex: none;
  border-top: 2px solid #f6f9f9;
  border-right: 1px solid #eee;
}
.attrs h2 {
  height: 35px;
  padding-left: 9px;
  border-bottom: 1px solid #ececec;
  background: #c1c1c1;
  color: #5f6368;
  line-height: 35px;
}
.page .attrs a {
  display: block;
  height: 41px;
  padding-left: 9px;
  border-bottom: 1px solid #ececec;
  color: #666;
  line-height: 42px;
}
.attrs a:nth-child(odd) {
  height: 42px;
}
.attrs .on {
  background: #ebebeb;
}
.rules {
  flex: 1;
  min-width: 0;
  margin-left: 3px;
  border-left: 1px solid #eee;
}
.rules h2 {
  height: 33px;
  padding-left: 3px;
  border-bottom: 1px solid #ebeeef;
  color: #1c3f85;
  line-height: 34px;
}
.rules .tools {
  gap: 18px;
  height: 43px;
  padding: 0 0 4px 8px;
}
.rules .pick {
  width: 153px;
  height: 27px;
  margin-left: -4px;
}
.warn {
  margin-left: -9px;
}
.tick {
  width: 25px;
}
.rules td {
  height: 36px;
}
.rules table {
  border-bottom: 1px solid #dbe3e5;
}

/* cmdb page */
.catalog {
  display: flex;
  flex-direction: column;
  width: 210px;
  flex: none;
}
.subtabs {
  display: flex;
  align-items: flex-start;
  gap: 4px;
  height: 31px;
  padding: 2px 2px 0;
  border-bottom: 1px solid #b4c3c7;
}
.subtabs a {
  width: 96px;
  height: 28px;
  border: 1px solid #b4c3c7;
  border-bottom: 0;
  border-radius: 5px 5px 0 0;
  background: #fdfefe;
  line-height: 27px;
  text-align: center;
}
.page .subtabs .on {
  border-color: #4893da;
  background: #4893da;
  color: #fff;
  font-weight: 700;
}
.tree.big {
  background-position: 26px 26px;
}
.big li {
  height: 26px;
  padding-left: 20px;
}
.big li:nth-child(even) {
  height: 27px;
}
.big .root {
  height: 26px;
  padding-left: 1px;
}
.big .exp {
  width: 12px;
  height: 12px;
  background-size: 8px 1px, 1px 8px;
}
.catalog .vbar {
  padding-bottom: 45px;
}
.vbar.edge {
  width: 8px;
  padding-bottom: 17px;
  overflow: hidden;
}
.edge .vthumb {
  border-right: 0;
  border-radius: 2px 0 0 2px;
}
.edge .vthumb i {
  width: 3px;
  margin-left: auto;
}
.items {
  flex: 1;
  min-width: 0;
  padding: 10px 0 0 4px;
}
.toolrow {
  display: flex;
  justify-content: space-between;
  align-items: flex-start;
  margin-bottom: 10px;
  padding-right: 20px;
}
.items .tools {
  gap: 19px;
  height: 33px;
  padding: 0 0 0 8px;
  background: #fdfefe;
}
.tools .filter {
  margin-left: 6px;
}
.items .tools .icon {
  padding-bottom: 5px;
}
.items .pick {
  width: 162px;
  height: 29px;
  margin-left: -4px;
  font-size: 15px;
}
.items .pick select {
  line-height: 20px;
}
.more {
  display: flex;
  height: 27px;
  border-radius: 3px;
  overflow: hidden;
  background: #4893da;
  color: #fff;
  font-weight: 500;
}
.more span {
  padding: 0 9px 0 7px;
  line-height: 28px;
}
.more i {
  height: 100%;
}
.items th {
  height: 43px;
  padding-top: 6px;
  font-size: 15px;
}
.items th:first-child,
.items th.latin {
  padding-top: 1px;
}
.items th.sort {
  padding-left: 11px;
}
th.latin svg {
  display: inline-block;
}
.items th.cut {
  padding-left: 5px;
}
.items td {
  height: 37px;
}
.items .picked td {
  background: #e4ebed;
}
.items td.st {
  padding: 0 2px;
}
.badge {
  display: block;
  height: 18px;
  color: #fff;
  font-weight: 500;
  line-height: 18px;
}
.repair {
  background: #857a00;
}
.active {
  background: #00a650;
}
.scrap {
  background: #ee1c25;
}
.items .hbar {
  height: 20px;
  margin-top: 1px;
}
.items .foot {
  height: 33px;
  margin-top: 0;
  padding: 10px 0 0 9px;
}
.items .actions {
  margin-left: -9px;
  padding-left: 6px;
}
.items .pager button {
  width: 19px;
  height: 19px;
}
.items .pager .current {
  margin-left: 18px;
}
.items .size {
  width: 47px;
  height: 21px;
}
.items .total {
  padding-right: 13px;
}
</style>
